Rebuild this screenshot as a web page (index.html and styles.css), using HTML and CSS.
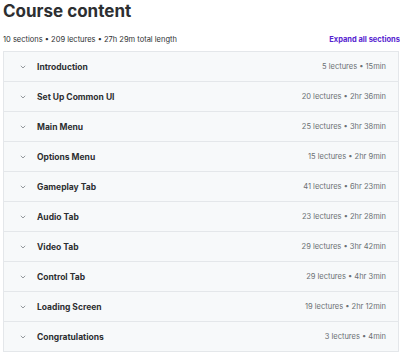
FILE: index.html
```html
<!DOCTYPE html>
<html>
<head>
<meta charset="utf-8">
<link rel="stylesheet" href="styles.css">
</head>
<body>
<div class="page">
  <h2 class="title">Course content</h2>
  <div class="meta">
    <span class="stats">10 sections • 209 lectures • 27h 29m total length</span>
    <span class="expand">Expand all sections</span>
  </div>
  <div class="sections">
    <div class="row"><span class="chev"><svg width="6" height="4" viewBox="0 0 6 4"><path d="M0.8 0.8 L3 3 L5.2 0.8" fill="none" stroke="#8a8f93" stroke-width="0.9"/></svg></span><span class="name">Introduction</span><span class="info">5 lectures • 15min</span></div>
    <div class="row"><span class="chev"><svg width="6" height="4" viewBox="0 0 6 4"><path d="M0.8 0.8 L3 3 L5.2 0.8" fill="none" stroke="#8a8f93" stroke-width="0.9"/></svg></span><span class="name">Set Up Common UI</span><span class="info">20 lectures • 2hr 36min</span></div>
    <div class="row"><span class="chev"><svg width="6" height="4" viewBox="0 0 6 4"><path d="M0.8 0.8 L3 3 L5.2 0.8" fill="none" stroke="#8a8f93" stroke-width="0.9"/></svg></span><span class="name">Main Menu</span><span class="info">25 lectures • 3hr 38min</span></div>
    <div class="row"><span class="chev"><svg width="6" height="4" viewBox="0 0 6 4"><path d="M0.8 0.8 L3 3 L5.2 0.8" fill="none" stroke="#8a8f93" stroke-width="0.9"/></svg></span><span class="name">Options Menu</span><span class="info">15 lectures • 2hr 9min</span></div>
    <div class="row"><span class="chev"><svg width="6" height="4" viewBox="0 0 6 4"><path d="M0.8 0.8 L3 3 L5.2 0.8" fill="none" stroke="#8a8f93" stroke-width="0.9"/></svg></span><span class="name">Gameplay Tab</span><span class="info">41 lectures • 6hr 23min</span></div>
    <div class="row"><span class="chev"><svg width="6" height="4" viewBox="0 0 6 4"><path d="M0.8 0.8 L3 3 L5.2 0.8" fill="none" stroke="#8a8f93" stroke-width="0.9"/></svg></span><span class="name">Audio Tab</span><span class="info">23 lectures • 2hr 28min</span></div>
    <div class="row"><span class="chev"><svg width="6" height="4" viewBox="0 0 6 4"><path d="M0.8 0.8 L3 3 L5.2 0.8" fill="none" stroke="#8a8f93" stroke-width="0.9"/></svg></span><span class="name">Video Tab</span><span class="info">29 lectures • 3hr 42min</span></div>
    <div class="row"><span class="chev"><svg width="6" height="4" viewBox="0 0 6 4"><path d="M0.8 0.8 L3 3 L5.2 0.8" fill="none" stroke="#8a8f93" stroke-width="0.9"/></svg></span><span class="name">Control Tab</span><span class="info">29 lectures • 4hr 3min</span></div>
    <div class="row"><span class="chev"><svg width="6" height="4" viewBox="0 0 6 4"><path d="M0.8 0.8 L3 3 L5.2 0.8" fill="none" stroke="#8a8f93" stroke-width="0.9"/></svg></span><span class="name">Loading Screen</span><span class="info">19 lectures • 2hr 12min</span></div>
    <div class="row"><span class="chev"><svg width="6" height="4" viewBox="0 0 6 4"><path d="M0.8 0.8 L3 3 L5.2 0.8" fill="none" stroke="#8a8f93" stroke-width="0.9"/></svg></span><span class="name">Congratulations</span><span class="info">3 lectures • 4min</span></div>
  </div>
</div>
</body>
</html>
```
FILE: styles.css
```css
html, body {
  margin: 0;
  padding: 0;
  background: #ffffff;
}
.page {
  padding: 0 0 0 3px;
  width: 397px;
  font-family: "Inter", "Liberation Sans", sans-serif;
  color: #2d2f31;
}
.title {
  margin: 0;
  padding-top: 2px;
  font-size: 17px;
  line-height: 19px;
  font-weight: 700;
  letter-spacing: 0;
}
.meta {
  display: flex;
  justify-content: space-between;
  align-items: center;
  height: 12px;
  margin-top: 12px;
  margin-bottom: 6px;
}
.stats {
  font-size: 7.5px;
  color: #2d2f31;
}
.expand {
  font-size: 7.5px;
  font-weight: 700;
  color: #5624d0;
}
.sections {
  width: 394px;
  border: 1px solid #e4e7ea;
  border-bottom: none;
}
.row {
  display: flex;
  align-items: center;
  height: 29px;
  border-bottom: 1px solid #e4e7ea;
  background: #f7f9fa;
  padding: 0 12px 0 16px;
}
.chev {
  display: flex;
  width: 6px;
  margin-right: 11px;
}
.name {
  flex: 1;
  font-size: 8.5px;
  font-weight: 700;
  color: #2d2f31;
}
.info {
  font-size: 7.5px;
  color: #6a6f73;
}
```
